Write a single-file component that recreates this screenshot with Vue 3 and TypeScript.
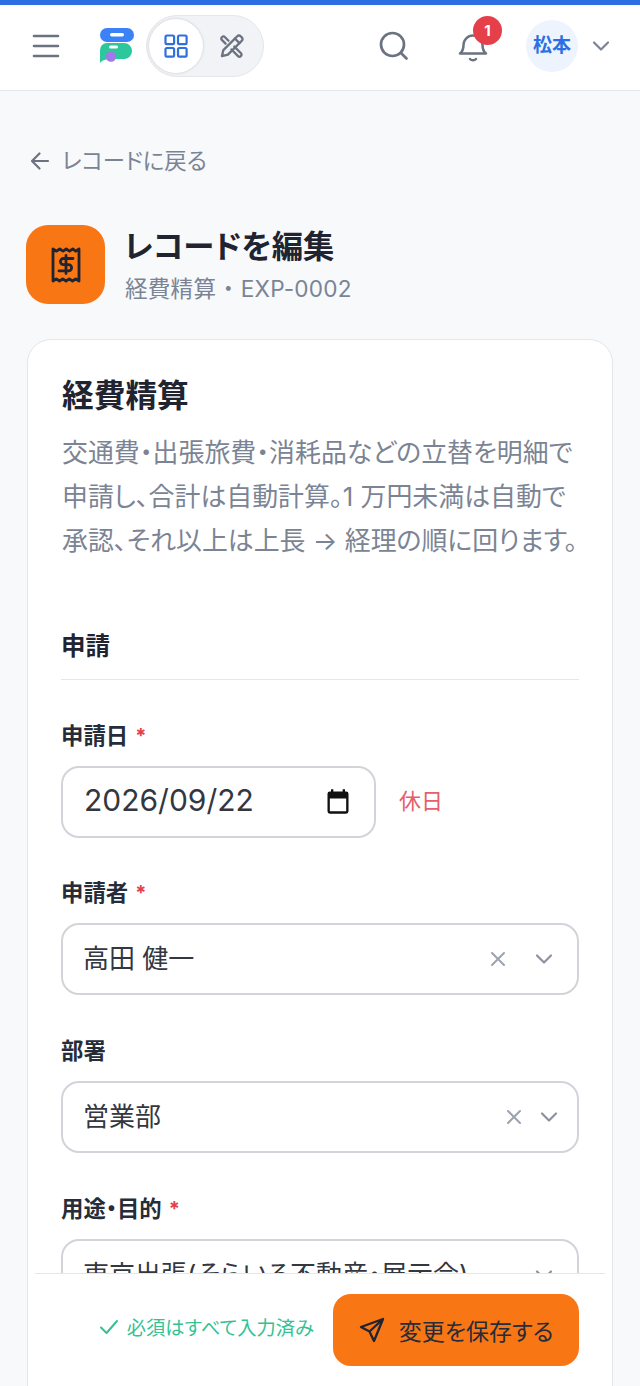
<script setup lang="ts">
interface SelectField {
  label: string;
  value: string;
  required: boolean;
  clearable: boolean;
  tight: boolean;
}

const fields: SelectField[] = [
  { label: "申請者", value: "高田 健一", required: true, clearable: true, tight: false },
  { label: "部署", value: "営業部", required: false, clearable: true, tight: true },
  { label: "用途・目的", value: "東京出張(そらいろ不動産・展示会)", required: true, clearable: false, tight: false },
];
</script>

<template>
  <div class="screen">
    <div class="accent"></div>
    <header class="topbar">
      <button class="icon-btn menu" aria-label="menu">
        <svg width="30" height="30" viewBox="0 0 30 30" fill="none" stroke="#6b7280" stroke-width="2.600" stroke-linecap="round">
          <path d="M3 5h24M3 15h24M3 25h24" />
        </svg>
      </button>
      <svg class="logo" width="36" height="36" viewBox="0 0 36 36">
        <rect x="1" y="0" width="34" height="14" rx="7" fill="#3b82f6" />
        <rect x="11" y="5" width="14" height="3.500" rx="1.750" fill="#fff" />
        <path d="M1 22a7 7 0 0 1 7-7h17a8 8 0 0 1 0 16h-11a12 6 0 0 0-13 4z" fill="#2cc79a" />
        <rect x="10" y="17.500" width="9" height="3" rx="1.500" fill="#fff" />
        <circle cx="12" cy="28.500" r="5.200" fill="#9f7aea" />
      </svg>
      <div class="mode-switch">
        <span class="mode active">
          <svg width="24" height="24" viewBox="0 0 24 24" fill="none" stroke="#2f6fe0" stroke-width="2.200" stroke-linejoin="round">
            <rect x="1.500" y="1.500" width="8.600" height="8.600" rx="1.400" />
            <rect x="14" y="1.500" width="8.600" height="8.600" rx="1.400" />
            <rect x="1.500" y="14" width="8.600" height="8.600" rx="1.400" />
            <rect x="14" y="14" width="8.600" height="8.600" rx="1.400" />
          </svg>
        </span>
        <span class="mode tools">
          <svg width="28" height="28" viewBox="0 0 24 24" fill="none" stroke="#6b7280" stroke-width="2" stroke-linecap="round" stroke-linejoin="round">
            <path d="M3.400 20.600 4.600 15.500 16.500 3.600a2 2 0 0 1 2.900 0l1 1a2 2 0 0 1 0 2.900L8.500 19.400z" />
            <path d="M14.500 5.600l3.900 3.900" />
            <path d="M9 7.500 5.800 4.300a1.600 1.600 0 0 0-2.300 0l-.2.200a1.600 1.600 0 0 0 0 2.300L6.500 10" />
            <path d="M14 12.500l5.700 5.700a1.600 1.600 0 0 1 0 2.300l-.2.200a1.600 1.600 0 0 1-2.300 0L11.500 15" />
          </svg>
        </span>
      </div>
      <div class="spacer"></div>
      <button class="icon-btn search" aria-label="search">
        <svg width="32" height="32" viewBox="0 0 32 32" fill="none" stroke="#6b7280" stroke-width="2.700" stroke-linecap="round">
          <circle cx="14.500" cy="14.500" r="11.500" />
          <path d="M23.500 23.500l5 5" />
        </svg>
      </button>
      <div class="bell">
        <svg width="30" height="32" viewBox="0 0 30 32" fill="none" stroke="#6b7280" stroke-width="2.500" stroke-linecap="round" stroke-linejoin="round">
          <path d="M2 23.500c2.500-2 3.500-4 3.500-8.500a9.500 9.500 0 0 1 19 0c0 4.500 1 6.500 3.500 8.500z" />
          <path d="M12 29a4 4 0 0 0 6 0" />
        </svg>
        <span class="badge">1</span>
      </div>
      <div class="avatar">松本</div>
      <svg class="user-caret" width="18" height="12" viewBox="0 0 18 12" fill="none" stroke="#7b8494" stroke-width="2.200" stroke-linecap="round" stroke-linejoin="round">
        <path d="M2 2.500l7 7 7-7" />
      </svg>
    </header>

    <main class="page">
      <a class="back">
        <svg width="20" height="20" viewBox="0 0 20 20" fill="none" stroke="#6b7280" stroke-width="2.200" stroke-linecap="round" stroke-linejoin="round">
          <path d="M18 10H2.500M9.500 2.500 2 10l7.500 7.500" />
        </svg>
        <span>レコードに戻る</span>
      </a>

      <div class="title-row">
        <div class="app-icon">
          <svg width="30" height="38" viewBox="0 0 30 38" fill="none" stroke="#1f2430" stroke-width="2.800" stroke-linecap="round" stroke-linejoin="round">
            <path d="M2 3v32l3.250-2.200 3.250 2.200 3.250-2.200 3.250 2.200 3.250-2.200 3.250 2.200 3.250-2.200 3.250 2.200V3l-3.250 2.200L21.750 3 18.500 5.200 15.250 3 12 5.200 8.750 3 5.500 5.200z" />
            <path d="M22 12.500h-9.500a3 3 0 0 0 0 6.200h5a3 3 0 0 1 0 6.200H8M15 9.500v18" />
          </svg>
        </div>
        <div class="title-text">
          <h1>レコードを編集</h1>
          <p>経費精算 ・ EXP-0002</p>
        </div>
      </div>

      <section class="card">
        <h2>経費精算</h2>
        <p class="desc">交通費・出張旅費・消耗品などの立替を明細で<br />申請し、合計は自動計算。1 万円未満は自動で<br />承認、それ以上は上長 → 経理の順に回ります。</p>

        <h3 class="section-title">申請</h3>

        <div class="field">
          <label class="field-label">申請日 <em>*</em></label>
          <div class="date-row">
            <div class="date-input">
              <span class="date-value">2026/09/22</span>
              <svg width="28" height="28" viewBox="0 0 24 24" fill="#111">
                <path d="M19 3h-1V1h-2v2H8V1H6v2H5a2 2 0 0 0-2 2v15a2 2 0 0 0 2 2h14a2 2 0 0 0 2-2V5a2 2 0 0 0-2-2zm0 17H5V9h14z" />
              </svg>
            </div>
            <span class="holiday">休日</span>
          </div>
        </div>

        <div v-for="f in fields" :key="f.label" class="field">
          <label class="field-label">{{ f.label }} <em v-if="f.required">*</em></label>
          <div class="select">
            <span class="select-value">{{ f.value }}</span>
            <div class="select-icons" :class="{ tight: f.tight }">
              <svg v-if="f.clearable" width="16" height="16" viewBox="0 0 16 16" fill="none" stroke="#9ca3af" stroke-width="2" stroke-linecap="round">
                <path d="M2 2l12 12M14 2 2 14" />
              </svg>
              <svg width="18" height="12" viewBox="0 0 18 12" fill="none" stroke="#8b93a1" stroke-width="2.200" stroke-linecap="round" stroke-linejoin="round">
                <path d="M2 2.500l7 7 7-7" />
              </svg>
            </div>
          </div>
        </div>
      </section>
    </main>

    <footer class="save-bar">
      <span class="status">
        <svg width="20" height="16" viewBox="0 0 20 16" fill="none" stroke="#34c295" stroke-width="2" stroke-linecap="round" stroke-linejoin="round">
          <path d="M2 8.500l5.500 5.500L18 2" />
        </svg>
        必須はすべて入力済み
      </span>
      <button class="save-btn">
        <svg width="26" height="26" viewBox="0 0 26 26" fill="none" stroke="#1f2430" stroke-width="2.300" stroke-linecap="round" stroke-linejoin="round">
          <path d="M24 2 2 10l8.500 4.500L15 24zM24 2 10.500 14.500" />
        </svg>
        変更を保存する
      </button>
    </footer>
  </div>
</template>

<style>
html,
body {
  margin: 0;
  background: #f7f9fb;
}
</style>

<style scoped>
.screen {
  position: relative;
  width: 640px;
  height: 1386px;
  overflow: hidden;
  background: #f7f9fb;
  color: #1f2937;
  font-family: Inter, "Noto Sans CJK JP", sans-serif;
  font-feature-settings: "palt";
}
.accent {
  height: 5px;
  background: #2b6fe3;
}
.topbar {
  display: flex;
  align-items: center;
  height: 86px;
  padding: 0 30px 3px 31px;
  box-sizing: border-box;
  background: #fff;
  border-bottom: 1px solid #e3e6ea;
}
.icon-btn {
  display: flex;
  padding: 0;
  border: 0;
  background: none;
}
.logo {
  margin-left: 38px;
}
.mode-switch {
  display: flex;
  align-items: center;
  width: 118px;
  height: 62px;
  margin-left: 11px;
  padding: 2px;
  box-sizing: border-box;
  border: 1px solid #e4e6ea;
  border-radius: 31px;
  background: #f1f3f6;
}
.mode {
  display: flex;
  align-items: center;
  justify-content: center;
  width: 54px;
  height: 54px;
  border-radius: 50%;
}
.mode.active {
  background: #fff;
  box-shadow: 0 0 3px rgba(0, 0, 0, 0.18);
}
.mode.tools {
  margin-left: 2px;
}
.spacer {
  flex: 1;
}
.bell {
  position: relative;
  display: flex;
  margin-left: 48px;
}
.badge {
  position: absolute;
  top: -14px;
  left: 15px;
  width: 29px;
  height: 29px;
  border-radius: 50%;
  background: #e5404a;
  color: #fff;
  font-size: 15px;
  font-weight: 700;
  line-height: 29px;
  text-align: center;
}
.avatar {
  width: 52px;
  height: 52px;
  margin-left: 38px;
  border-radius: 50%;
  background: #edf4fe;
  color: #2b6fe3;
  font-size: 19px;
  font-weight: 700;
  line-height: 52px;
  text-align: center;
}
.user-caret {
  margin-left: 14px;
}
.page {
  padding: 58px 27px 0;
}
.back {
  display: flex;
  align-items: center;
  gap: 12px;
  padding-left: 3px;
  color: #7b8494;
  font-size: 22.400px;
  line-height: 24px;
}
.title-row {
  display: flex;
  align-items: center;
  gap: 19px;
  margin-top: 52px;
  margin-left: -1px;
}
.app-icon {
  display: flex;
  align-items: center;
  justify-content: center;
  width: 79px;
  height: 79px;
  border-radius: 22px;
  background: #f97615;
}
.title-text h1 {
  margin: 0;
  color: #1f2430;
  font-size: 31.300px;
  font-weight: 700;
  line-height: 42px;
}
.title-text p {
  margin: 6px 0 0 1px;
  color: #7b8494;
  font-size: 22.600px;
  letter-spacing: 0.2px;
  line-height: 30px;
}
.card {
  height: 1200px;
  margin-top: 35px;
  padding: 34px 33px 0;
  border: 1px solid #e3e6ea;
  border-radius: 24px;
  background: #fff;
}
.card h2 {
  margin: 0;
  padding-left: 1px;
  color: #1f2430;
  font-size: 31.700px;
  font-weight: 700;
  line-height: 44px;
}
.desc {
  margin: 13px 0 0;
  padding-left: 1px;
  color: #7b8494;
  font-size: 25.900px;
  line-height: 44px;
  white-space: nowrap;
}
.section-title {
  margin: 67px 0 0;
  padding-bottom: 16px;
  border-bottom: 1px solid #e3e6ea;
  color: #1f2430;
  font-size: 24.500px;
  font-weight: 700;
  line-height: 33px;
}
.field {
  margin-top: 40px;
}
.field-label {
  display: flex;
  gap: 7px;
  height: 32px;
  margin-bottom: 14px;
  color: #262c38;
  font-size: 22.400px;
  font-weight: 700;
  line-height: 32px;
}
.field-label em {
  color: #e5404a;
  font-size: 20px;
  font-style: normal;
}
.date-row {
  display: flex;
  align-items: center;
  gap: 23px;
  margin-bottom: -1px;
}
.date-input {
  display: flex;
  align-items: center;
  justify-content: space-between;
  width: 315px;
  height: 72px;
  padding: 0 22px 0 21px;
  box-sizing: border-box;
  border: 2px solid #d1d4d9;
  border-radius: 18px;
  color: #33373f;
  font-size: 30px;
}
.date-value {
  margin-bottom: 4px;
}
.holiday {
  margin-bottom: 6px;
  color: #e5606a;
  font-size: 22px;
}
.select {
  display: flex;
  align-items: center;
  justify-content: space-between;
  height: 72px;
  padding: 0 24px 0 20px;
  box-sizing: border-box;
  border: 2px solid #d1d4d9;
  border-radius: 18px;
}
.select-value {
  margin-bottom: 6px;
  color: #33373f;
  font-size: 26px;
}
.select-icons {
  display: flex;
  align-items: center;
  gap: 29px;
}
.select-icons.tight {
  gap: 18px;
  margin-right: -5px;
}
.save-bar {
  position: absolute;
  left: 35px;
  right: 35px;
  top: 1273px;
  display: flex;
  align-items: flex-start;
  justify-content: flex-end;
  gap: 19px;
  height: 108px;
  padding: 20px 26px 0 0;
  box-sizing: border-box;
  border-top: 1px solid #e3e6ea;
  background: #fff;
}
.status {
  display: flex;
  align-items: center;
  gap: 8px;
  height: 66px;
  color: #34c295;
  font-size: 19.300px;
}
.save-btn {
  display: flex;
  align-items: center;
  justify-content: center;
  gap: 14px;
  width: 246px;
  height: 72px;
  padding: 0;
  border: 0;
  border-radius: 18px;
  background: #f97615;
  color: #262c38;
  font-family: inherit;
  font-size: 23px;
  font-feature-settings: "palt";
}
</style>
